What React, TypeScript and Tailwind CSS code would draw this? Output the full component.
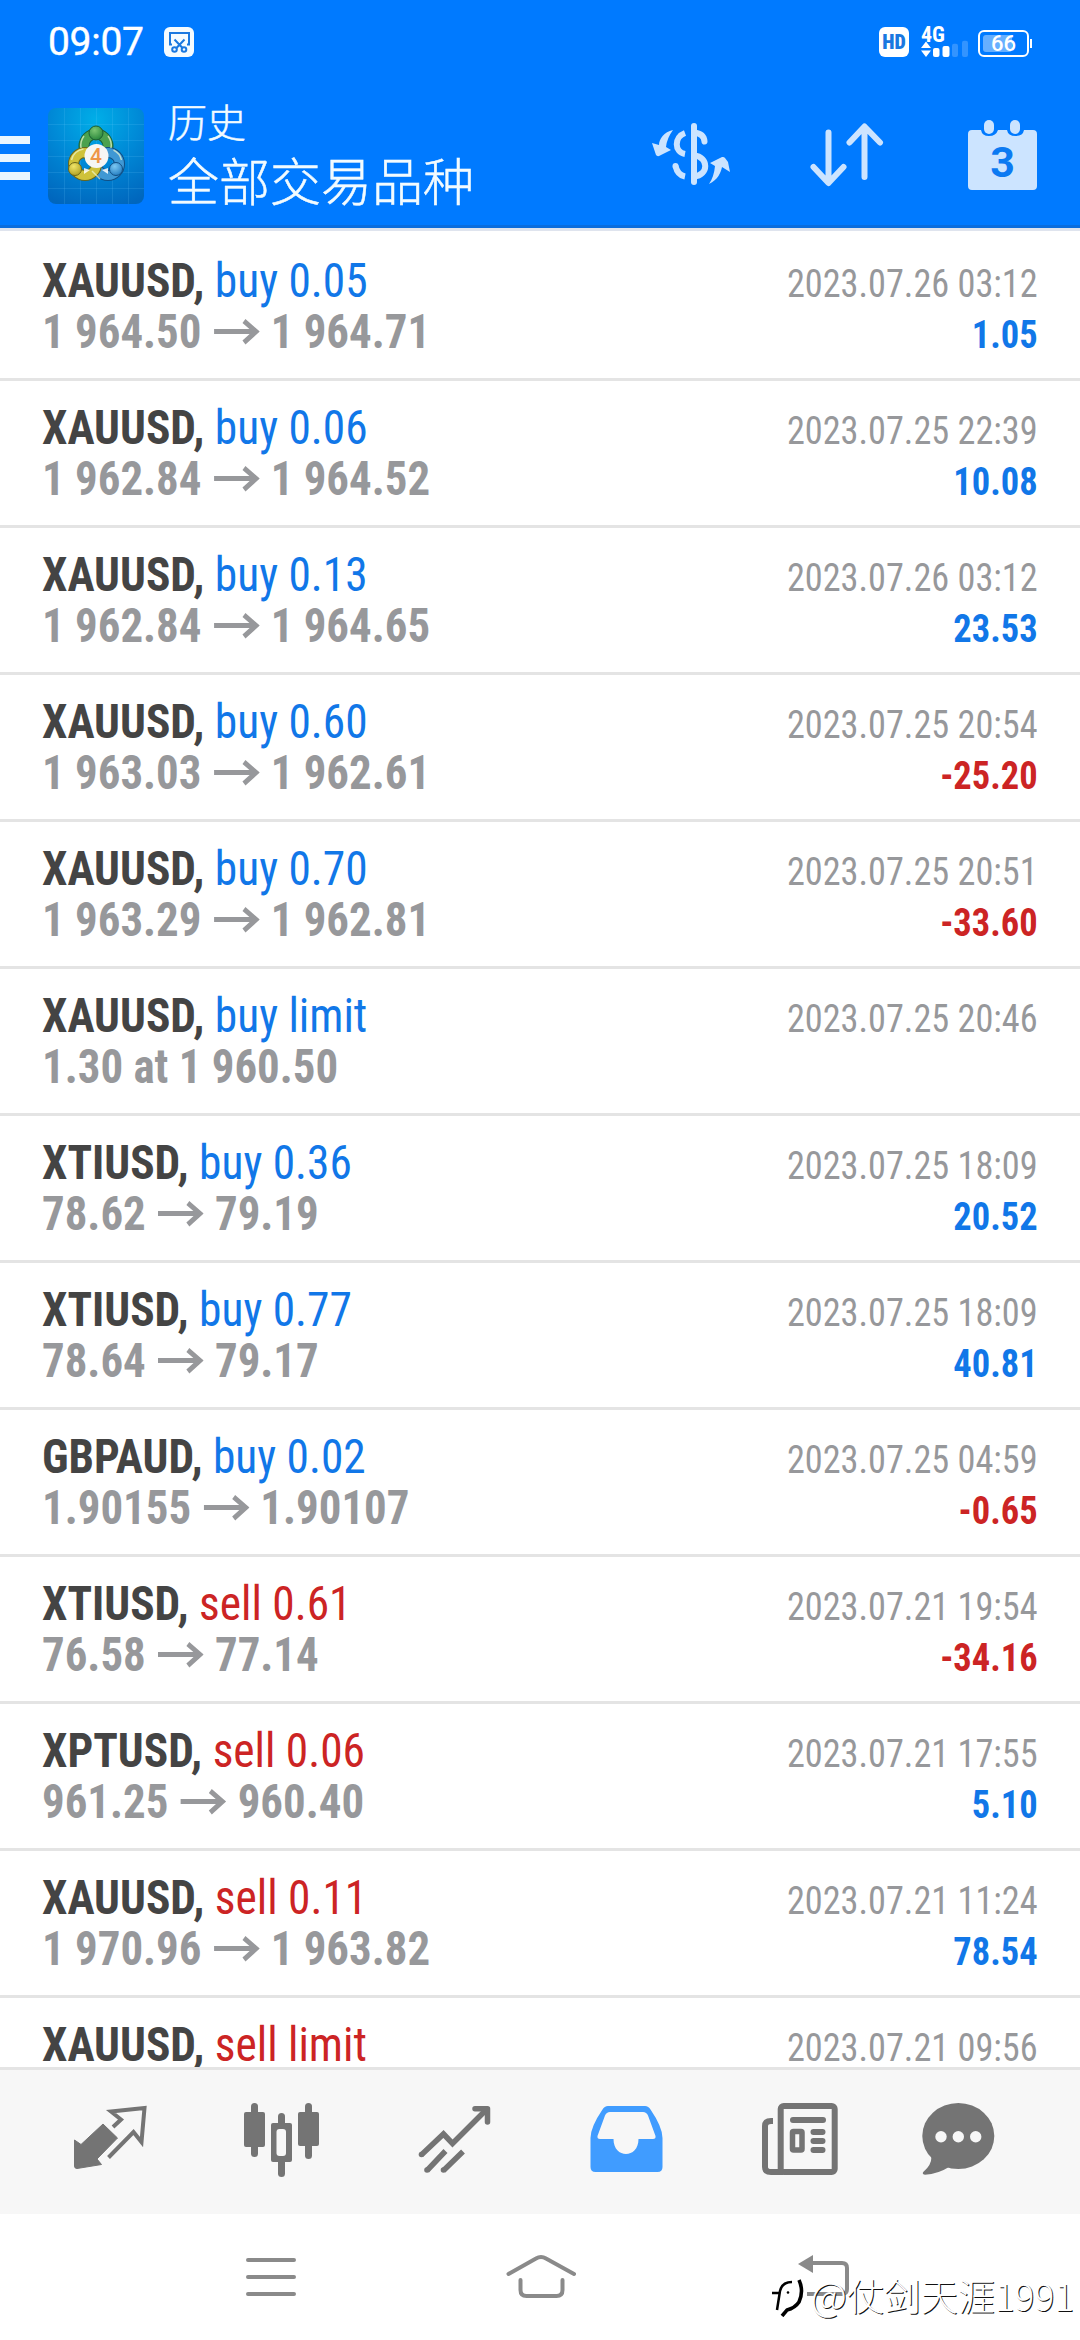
import React from "react";
import clsx from "clsx";

type Side = "buy" | "sell";

interface Deal {
  symbol: string;
  side: Side;
  volume: string;
  from?: string;
  to?: string;
  note?: string;
  time: string;
  profit?: string;
}

const deals: Deal[] = [
  { symbol: "XAUUSD", side: "buy", volume: "0.05", from: "1 964.50", to: "1 964.71", time: "2023.07.26 03:12", profit: "1.05" },
  { symbol: "XAUUSD", side: "buy", volume: "0.06", from: "1 962.84", to: "1 964.52", time: "2023.07.25 22:39", profit: "10.08" },
  { symbol: "XAUUSD", side: "buy", volume: "0.13", from: "1 962.84", to: "1 964.65", time: "2023.07.26 03:12", profit: "23.53" },
  { symbol: "XAUUSD", side: "buy", volume: "0.60", from: "1 963.03", to: "1 962.61", time: "2023.07.25 20:54", profit: "-25.20" },
  { symbol: "XAUUSD", side: "buy", volume: "0.70", from: "1 963.29", to: "1 962.81", time: "2023.07.25 20:51", profit: "-33.60" },
  { symbol: "XAUUSD", side: "buy", volume: "limit", note: "1.30 at 1 960.50", time: "2023.07.25 20:46" },
  { symbol: "XTIUSD", side: "buy", volume: "0.36", from: "78.62", to: "79.19", time: "2023.07.25 18:09", profit: "20.52" },
  { symbol: "XTIUSD", side: "buy", volume: "0.77", from: "78.64", to: "79.17", time: "2023.07.25 18:09", profit: "40.81" },
  { symbol: "GBPAUD", side: "buy", volume: "0.02", from: "1.90155", to: "1.90107", time: "2023.07.25 04:59", profit: "-0.65" },
  { symbol: "XTIUSD", side: "sell", volume: "0.61", from: "76.58", to: "77.14", time: "2023.07.21 19:54", profit: "-34.16" },
  { symbol: "XPTUSD", side: "sell", volume: "0.06", from: "961.25", to: "960.40", time: "2023.07.21 17:55", profit: "5.10" },
  { symbol: "XAUUSD", side: "sell", volume: "0.11", from: "1 970.96", to: "1 963.82", time: "2023.07.21 11:24", profit: "78.54" },
  { symbol: "XAUUSD", side: "sell", volume: "limit", time: "2023.07.21 09:56" },
];

const StatusBar: React.FC = () => (
  <div className="flex h-[84px] items-center justify-between pl-[48px] pr-[48px] text-white">
    <div className="flex items-center gap-[20px]">
      <span className="font-['Roboto',sans-serif] text-[39px] leading-none tracking-[-0.3px] [-webkit-text-stroke:0.4px_#fff]">09:07</span>
      <svg width="30" height="30" viewBox="0 0 30 30" fill="none">
        <rect width="30" height="30" rx="6" fill="#f4fbff" />
        <g stroke="#1a78e0" strokeWidth="2">
          <path d="M8 17.5H6V6h19v11.500h-2" />
          <path d="M10.500 12.500l8.500 9M20.500 12.500l-8.500 9" />
          <circle cx="10.500" cy="22.500" r="2.300" />
          <circle cx="20" cy="22.500" r="2.300" />
        </g>
      </svg>
    </div>
    <div className="flex items-center">
      <span className="flex size-[30px] items-center justify-center rounded-[6px] bg-white font-['Roboto_Condensed',sans-serif] text-[20px] font-black leading-none text-[#1a78e0]">
        HD
      </span>
      <div className="ml-[12px] flex h-[30px] flex-col">
        <span className="h-[15px] font-['Roboto_Condensed',sans-serif] text-[22px] font-bold leading-[15px]">4G</span>
        <svg width="48" height="17" viewBox="0 0 48 17" fill="#fff" className="-mt-[2px]">
          <path d="M0 8l5-6.500L10 8zM0 10.500h10L5 17z" />
          <rect x="12" y="8" width="6.500" height="9" rx="2" />
          <rect x="21.500" y="6" width="7" height="11" rx="2" />
          <rect x="31" y="3.700" width="6" height="13.300" rx="2" opacity=".2" />
          <rect x="41" y="0.700" width="6" height="16.300" rx="2" opacity=".2" />
        </svg>
      </div>
      <div className="ml-[9px] mt-[3px] flex items-center">
        <div className="relative flex h-[27px] w-[51px] items-center justify-center rounded-[6px] border-2 border-white">
          <div className="absolute left-[3px] top-[3px] h-[17px] w-[29px] rounded-[3px] bg-white/40" />
          <span className="relative font-['Roboto',sans-serif] text-[22px] font-medium leading-none">66</span>
        </div>
        <div className="ml-px h-[9px] w-[2px] bg-white" />
      </div>
    </div>
  </div>
);

const AppLogo: React.FC = () => (
  <svg width="96" height="96" viewBox="0 0 96 96">
    <defs>
      <radialGradient id="tile" cx=".5" cy=".12" r=".95">
        <stop offset="0" stopColor="#00aee8" />
        <stop offset=".5" stopColor="#0088d6" />
        <stop offset="1" stopColor="#0066bd" />
      </radialGradient>
      <radialGradient id="green" cx=".4" cy=".3" r=".8">
        <stop offset="0" stopColor="#7cc672" />
        <stop offset="1" stopColor="#1f7f35" />
      </radialGradient>
      <radialGradient id="yellow" cx=".4" cy=".3" r=".8">
        <stop offset="0" stopColor="#f0e468" />
        <stop offset="1" stopColor="#a89a1c" />
      </radialGradient>
      <radialGradient id="blue" cx=".4" cy=".3" r=".8">
        <stop offset="0" stopColor="#7cc8f2" />
        <stop offset="1" stopColor="#1b76bd" />
      </radialGradient>
    </defs>
    <rect width="96" height="96" rx="8" fill="url(#tile)" />
    <path
      d="M0 16.500h96M0 32.500h96M0 48.500h96M0 64.500h96M0 80.500h96M16.500 0v96M32.500 0v96M48.500 0v96M64.500 0v96M80.500 0v96"
      stroke="#6fd0ff"
      strokeOpacity=".16"
    />
    <g fill="none">
      <circle cx="48" cy="38" r="12" stroke="#1c5f33" strokeWidth="11" />
      <circle cx="48" cy="38" r="12" stroke="#4ba14e" strokeWidth="9" />
      <circle cx="60" cy="56" r="11.500" stroke="#114f84" strokeWidth="11" />
      <circle cx="60" cy="56" r="11.500" stroke="#3f98d4" strokeWidth="9" />
      <circle cx="37" cy="56" r="11.500" stroke="#6b6719" strokeWidth="11" />
      <circle cx="37" cy="56" r="11.500" stroke="#cfc23a" strokeWidth="9" />
      <path
        d="M36 28a15.500 15.500 0 0 0-3 12M60 28a15.500 15.500 0 0 1 3 12M23.500 52a14.500 14.500 0 0 1 12-11M73.500 52a15 15 0 0 0-8-10M44 63l8 8"
        stroke="#eef8d0"
        strokeOpacity=".7"
        strokeWidth="1.500"
      />
      <path d="M36 60l6 2-6 4zM60 60l-6 2 6 4z" fill="#fff" fillOpacity=".85" />
    </g>
    <circle cx="48" cy="25" r="7" fill="url(#green)" stroke="#1c5f33" />
    <circle cx="27" cy="61" r="6.500" fill="url(#yellow)" stroke="#6b6719" />
    <circle cx="68" cy="61" r="6.500" fill="url(#blue)" stroke="#114f84" />
    <circle cx="48.500" cy="48" r="12" fill="#f6f6f4" />
    <text x="48" y="55" textAnchor="middle" fontFamily="Roboto, sans-serif" fontSize="21" fontWeight="500" fill="#ee9648">
      4
    </text>
  </svg>
);

const Header: React.FC = () => (
  <header className="shrink-0 border-b-[3px] border-[#dfe4ee] bg-[#007aff]">
    <StatusBar />
    <div className="flex h-[144px] items-start justify-between border-b-[3px] border-[#0a6ddd] pr-[43px]">
      <div className="flex">
        <div className="mt-[52px] flex w-[30px] flex-col gap-[10px]">
          <i className="h-[8px] bg-[#e9f6ff]" />
          <i className="h-[8px] bg-[#e9f6ff]" />
          <i className="h-[8px] bg-[#e9f6ff]" />
        </div>
        <div className="ml-[18px] mt-[24px]">
          <AppLogo />
        </div>
        <div className="ml-[24px] mt-[16px] flex flex-col font-['Noto_Sans_CJK_SC',sans-serif] font-light text-[#f2fbff] [-webkit-text-stroke:0.5px_#f2fbff]">
          <span className="text-[39px] leading-[40px]">历史</span>
          <h1 className="mt-[9px] text-[51px] font-light leading-[60px]">全部交易品种</h1>
        </div>
      </div>
      <div className="mt-[35px] flex items-start text-[#cce4ff]">
        {/* currency exchange */}
        <svg width="80" height="62" viewBox="0 0 80 62" fill="none" className="mt-[4px]">
          <path d="M22 7C13 9 8 16 8 22L1 20l4 12q1 1.500 3 1l12-6-5-3q1-9 7-17z" fill="currentColor" />
          <path d="M58 61c9-4 12-12 13-17l8 5-2-10-3-4q-1-1.500-3-1l-12 6 5 3q-1 11-6 18z" fill="currentColor" />
          <g stroke="currentColor" strokeWidth="6">
            <path d="M34 10C23 14 23 29 34 31" />
            <path d="M24.500 43q2 9 9.500 10.500" strokeLinecap="butt" />
            <path d="M43 3v56" strokeLinecap="round" />
            <path d="M43 9.500q10 1 10.500 9" strokeLinecap="round" />
            <path d="M43 32.500c15 1 15 20 0 21" />
          </g>
          <circle cx="24.500" cy="43" r="3" fill="currentColor" />
        </svg>
        {/* sort */}
        <svg width="74" height="64" viewBox="0 0 74 64" fill="none" stroke="currentColor" strokeWidth="6" strokeLinecap="round" strokeLinejoin="round" className="ml-[79px] mt-[4px]">
          <path d="M18.500 9.500v50M3.500 44l15 16 15-16" />
          <path d="M54.500 54V5M39.500 19.500l15-16 15.500 16" />
        </svg>
        {/* calendar */}
        <svg width="69" height="72" viewBox="0 0 69 72" className="ml-[84px]">
          <path
            d="M4 11h9q1 6 8 6t9-6h9q1 6 8.500 6t8.500-6h9q4 0 4 4v52q0 4-4 4H4q-4 0-4-4V15q0-4 4-4z"
            fill="currentColor"
          />
          <rect x="16" y="1" width="10" height="14" rx="5" fill="currentColor" />
          <rect x="42" y="1" width="10" height="14" rx="5" fill="currentColor" />
          <text x="34.500" y="58" textAnchor="middle" fontFamily="Roboto, sans-serif" fontSize="43" fontWeight="700" fill="#0c7af2">
            3
          </text>
        </svg>
      </div>
    </div>
  </header>
);

const PriceArrow: React.FC = () => (
  <svg width="49" height="28" viewBox="0 0 49 28" fill="none" stroke="#97989b" strokeWidth="5" className="ml-[13px] mr-[12px]">
    <path d="M0 13.500h45M32 3l13 10.500L32 24.500" />
  </svg>
);

const DealRow: React.FC<{ deal: Deal }> = ({ deal }) => (
  <li className="flex h-[147px] shrink-0 justify-between border-b-[3px] border-[#e4e4e4] pl-[42px] pr-[42px]">
    <div className="pt-[21px] text-[48px] leading-[51px]">
      <div className="origin-left scale-x-[0.945] whitespace-pre">
        <span className="font-bold text-[#444]">{deal.symbol}, </span>
        <span className={deal.side === "buy" ? "text-[#1177e8]" : "text-[#cc2424]"}>
          {deal.side} {deal.volume}
        </span>
      </div>
      {deal.from && (
        <div className="flex origin-left scale-x-[0.935] items-center font-bold text-[#97989b]">
          <span>{deal.from}</span>
          <PriceArrow />
          <span>{deal.to}</span>
        </div>
      )}
      {deal.note && <div className="origin-left scale-x-[0.935] font-bold text-[#97989b]">{deal.note}</div>}
    </div>
    <div className="pt-[25px] text-right text-[39px] leading-[51px]">
      <div className="origin-right scale-x-[0.93] text-[#97989b]">{deal.time}</div>
      {deal.profit && (
        <div className={clsx("origin-right scale-x-[0.935] font-bold", deal.profit.startsWith("-") ? "text-[#cc2424]" : "text-[#1177e8]")}>
          {deal.profit}
        </div>
      )}
    </div>
  </li>
);

const TabBar: React.FC = () => (
  <nav className="flex h-[147px] shrink-0 items-start border-t-[3px] border-[#e4e4e4] bg-[#f7f7f7] pl-[72px] pt-[30px] text-[#747474]">
    {/* quotes */}
    <svg width="76" height="75" viewBox="0 0 76 75" fill="none">
      <path d="M2.500 40l6.500 4.500L31 24l14.500 14L25 59l4.500 5.500-24.500 4q-2.500 0-2.500-2.500z" fill="currentColor" stroke="currentColor" strokeLinejoin="round" />
      <path d="M41 27l8-7.500-10-8 33.500-3.500-3 34-8-10-25 25.500" stroke="currentColor" strokeWidth="4" />
    </svg>
    {/* chart */}
    <svg width="76" height="78" viewBox="0 0 76 78" fill="currentColor" className="ml-[96px]">
      <rect y="12" width="21" height="35" rx="2" />
      <rect x="7" y="3" width="7" height="54" rx="3.500" />
      <rect x="27" y="23" width="21" height="39" rx="2" />
      <rect x="34" y="13" width="7" height="64" rx="3.500" />
      <rect x="32.500" y="29" width="9.500" height="27" rx="3" fill="#f7f7f7" />
      <rect x="54" y="12" width="21" height="34" rx="2" />
      <rect x="61" y="3" width="7" height="56" rx="3.500" />
    </svg>
    {/* trade */}
    <svg width="74" height="75" viewBox="0 0 74 75" fill="none" stroke="currentColor" strokeWidth="5.500" className="ml-[98px]">
      <path d="M3.500 54.700L25.500 34l9 9.500L69 9" strokeLinejoin="miter" />
      <path d="M57 8.700h12.500V22" strokeLinecap="round" strokeLinejoin="round" />
      <path d="M9 70.500l18.500-19.500M25.500 70.500l19.500-19" />
      <g fill="currentColor" stroke="none">
        <circle cx="3.500" cy="54.500" r="2.800" />
        <circle cx="9" cy="70" r="2.800" />
        <circle cx="25.500" cy="70" r="2.800" />
      </g>
    </svg>
    {/* history */}
    <svg width="73" height="72" viewBox="0 0 73 72" className="ml-[98px]">
      <path
        fillRule="evenodd"
        fill="#409cff"
        d="M18 6h37q3.500 0 5.500 3.500Q72.500 27 72.500 38v29q0 5-5 5h-62q-5 0-5-5V38Q.5 27 12.500 9.500 14.500 6 18 6zM20 12q-3.500 0-5 3.500L7.500 36q-.5 3 2.500 3h13.500c0 20 25 20 25 0H63q3 0 2.500-3L58 15.500Q56.500 12 53 12z"
      />
    </svg>
    {/* news */}
    <svg width="76" height="75" viewBox="0 0 76 75" fill="none" stroke="currentColor" strokeWidth="6" className="ml-[99px]">
      <rect x="18.700" y="6" width="54" height="66" rx="3" />
      <path d="M11 21H9q-6 0-6 5v41q0 5 6 5h12" />
      <path d="M31 20h30M51.500 32h9M51.500 41h9M51.500 50h9" strokeLinecap="round" />
      <rect x="30.500" y="31.500" width="9.500" height="18.500" rx="1" strokeWidth="5.500" />
    </svg>
    {/* mailbox */}
    <svg width="73" height="75" viewBox="0 0 73 75" className="ml-[84px]">
      <ellipse cx="36.300" cy="36" rx="36" ry="33" fill="currentColor" />
      <path fill="currentColor" d="M27 67q-11 7-24 7.700-3.500-.5-1.500-3 8-6.500 8-15.200z" />
      <g fill="#f7f7f7">
        <circle cx="19" cy="36.700" r="5.700" />
        <circle cx="36.300" cy="36.700" r="5.700" />
        <circle cx="53.700" cy="36.700" r="5.700" />
      </g>
    </svg>
  </nav>
);

const SystemNav: React.FC = () => (
  <div className="relative flex h-[126px] shrink-0 items-start bg-white pl-[246px] pt-[40px] text-[#8a8a8a]">
    <svg width="50" height="44" viewBox="0 0 50 44" stroke="currentColor" strokeWidth="4" strokeLinecap="round">
      <path d="M2 6h46M2 23h46M2 40h46" />
    </svg>
    <svg width="70" height="46" viewBox="0 0 70 46" fill="none" stroke="currentColor" strokeWidth="4" strokeLinecap="round" className="ml-[210px]">
      <path d="M2.500 20L30 4.500q5-3 10 0L68 20" />
      <path d="M14.500 26v10q0 6 6 6h30q6 0 6-6V26" />
    </svg>
    <svg width="52" height="46" viewBox="0 0 52 46" fill="none" stroke="currentColor" strokeWidth="4" className="ml-[222px]">
      <path d="M0 10L15 1v18z" fill="currentColor" stroke="none" />
      <path d="M8 9h36q5 0 5 5v21q0 5-5 5H9" />
    </svg>
    <div className="absolute bottom-[20px] right-[6px] flex items-center gap-[3px] text-white">
      <svg width="40" height="44" viewBox="0 0 40 44" fill="none" strokeLinecap="butt">
        <g stroke="#000">
          <path d="M10 37l3-19q2-9 12-9M5 20h8" strokeWidth="2.500" />
          <path d="M32 7q5 11 0 22-4 6-12 8l-5 6" strokeWidth="3.600" />
        </g>
        <circle cx="21" cy="19.500" r="1.300" fill="#000" />
      </svg>
      <span className="font-['Noto_Sans_CJK_SC',sans-serif] text-[37px] font-light leading-[50px] [text-shadow:1px_1px_0_#111]">
        <span className="text-[40px] leading-[40px]">@</span>仗剑天涯1991
      </span>
    </div>
  </div>
);

export default function App() {
  return (
    <div className="flex h-[2340px] w-[1080px] flex-col overflow-hidden bg-white font-['Roboto_Condensed',sans-serif]">
      <Header />
      <ul className="flex min-h-0 flex-1 flex-col overflow-hidden pt-[3px]">
        {deals.map((deal) => (
          <DealRow key={`${deal.symbol}-${deal.time}-${deal.volume}`} deal={deal} />
        ))}
      </ul>
      <TabBar />
      <SystemNav />
    </div>
  );
}
